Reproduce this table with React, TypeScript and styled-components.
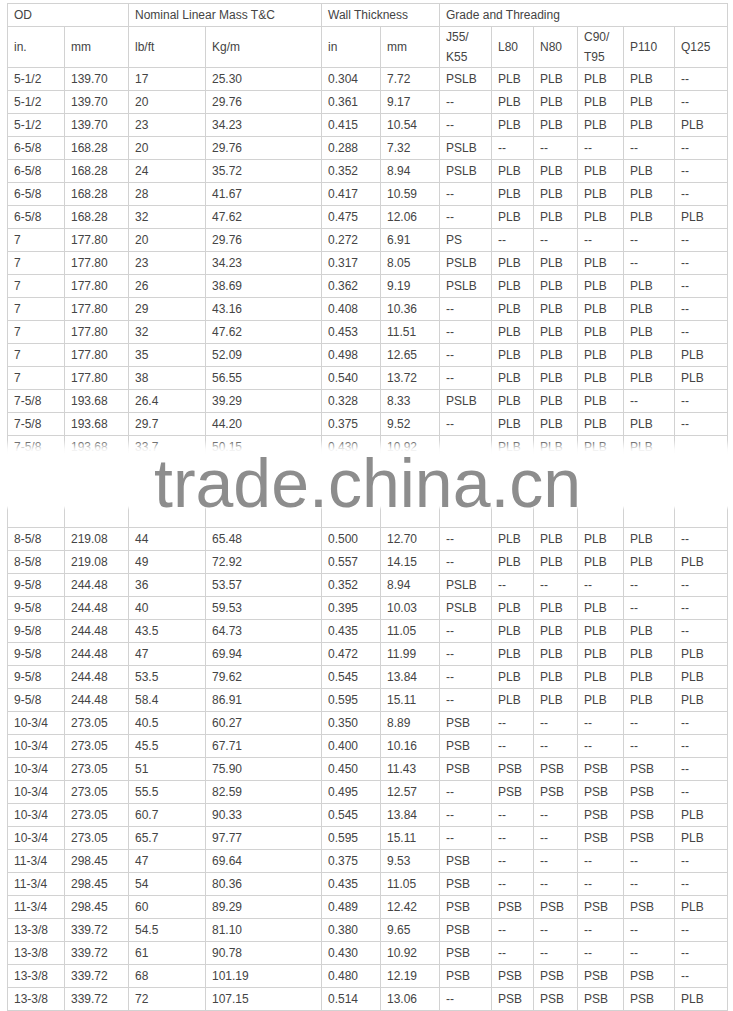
import { createGlobalStyle, styled } from 'styled-components'

const GlobalStyle = createGlobalStyle`
  html, body {
    margin: 0;
    padding: 0;
    background: #ffffff;
  }
`

const Page = styled.div`
  position: relative;
  padding: 3px 0 0 7px;
  font-family: 'Liberation Sans', Arial, sans-serif;
  font-size: 12px;
  color: #444444;
`

const Table = styled.table`
  border-collapse: collapse;
  table-layout: fixed;
  width: 721px;
`

const Cell = styled.td`
  border: 1px solid #d2d2d2;
  padding: 0 0 0 6px;
  height: 22px;
  line-height: 21px;
  vertical-align: middle;
  white-space: nowrap;
  overflow: hidden;
`

const GroupCell = styled(Cell)`
  height: 21px;
  padding-top: 1px;
`

const UnitCell = styled(Cell)`
  height: 40px;
  line-height: 20px;
`

const Watermark = styled.div`
  position: absolute;
  left: 0;
  right: 0;
  top: 440px;
  height: 70px;
  background: linear-gradient(
    to bottom,
    rgba(255, 255, 255, 0) 0px,
    rgba(255, 255, 255, 0.9) 9px,
    #ffffff 14px,
    #ffffff 66px,
    rgba(255, 255, 255, 0) 70px
  );
`

const WatermarkText = styled.div`
  padding: 9px 0 0 154px;
  font-family: 'Liberation Sans', Arial, sans-serif;
  font-size: 68px;
  line-height: 68px;
  color: #8d8d8d;
`

const widths = [57, 64, 77, 116, 59, 59, 52, 42, 44, 46, 51, 53]

const groups: [string, number][] = [
  ['OD', 2],
  ['Nominal Linear Mass T&C', 2],
  ['Wall Thickness', 2],
  ['Grade and Threading', 6],
]

const units: string[][] = [
  ['in.'],
  ['mm'],
  ['lb/ft'],
  ['Kg/m'],
  ['in'],
  ['mm'],
  ['J55/', 'K55'],
  ['L80'],
  ['N80'],
  ['C90/', 'T95'],
  ['P110'],
  ['Q125'],
]

const blank = ['', '', '', '', '', '', '', '', '', '', '', '']

const rows: string[][] = [
  ['5-1/2', '139.70', '17', '25.30', '0.304', '7.72', 'PSLB', 'PLB', 'PLB', 'PLB', 'PLB', '--'],
  ['5-1/2', '139.70', '20', '29.76', '0.361', '9.17', '--', 'PLB', 'PLB', 'PLB', 'PLB', '--'],
  ['5-1/2', '139.70', '23', '34.23', '0.415', '10.54', '--', 'PLB', 'PLB', 'PLB', 'PLB', 'PLB'],
  ['6-5/8', '168.28', '20', '29.76', '0.288', '7.32', 'PSLB', '--', '--', '--', '--', '--'],
  ['6-5/8', '168.28', '24', '35.72', '0.352', '8.94', 'PSLB', 'PLB', 'PLB', 'PLB', 'PLB', '--'],
  ['6-5/8', '168.28', '28', '41.67', '0.417', '10.59', '--', 'PLB', 'PLB', 'PLB', 'PLB', '--'],
  ['6-5/8', '168.28', '32', '47.62', '0.475', '12.06', '--', 'PLB', 'PLB', 'PLB', 'PLB', 'PLB'],
  ['7', '177.80', '20', '29.76', '0.272', '6.91', 'PS', '--', '--', '--', '--', '--'],
  ['7', '177.80', '23', '34.23', '0.317', '8.05', 'PSLB', 'PLB', 'PLB', 'PLB', '--', '--'],
  ['7', '177.80', '26', '38.69', '0.362', '9.19', 'PSLB', 'PLB', 'PLB', 'PLB', 'PLB', '--'],
  ['7', '177.80', '29', '43.16', '0.408', '10.36', '--', 'PLB', 'PLB', 'PLB', 'PLB', '--'],
  ['7', '177.80', '32', '47.62', '0.453', '11.51', '--', 'PLB', 'PLB', 'PLB', 'PLB', '--'],
  ['7', '177.80', '35', '52.09', '0.498', '12.65', '--', 'PLB', 'PLB', 'PLB', 'PLB', 'PLB'],
  ['7', '177.80', '38', '56.55', '0.540', '13.72', '--', 'PLB', 'PLB', 'PLB', 'PLB', 'PLB'],
  ['7-5/8', '193.68', '26.4', '39.29', '0.328', '8.33', 'PSLB', 'PLB', 'PLB', 'PLB', '--', '--'],
  ['7-5/8', '193.68', '29.7', '44.20', '0.375', '9.52', '--', 'PLB', 'PLB', 'PLB', 'PLB', '--'],
  ['7-5/8', '193.68', '33.7', '50.15', '0.430', '10.92', '', 'PLB', 'PLB', 'PLB', 'PLB', ''],
  // rows hidden by the watermark band
  blank,
  blank,
  blank,
  ['8-5/8', '219.08', '44', '65.48', '0.500', '12.70', '--', 'PLB', 'PLB', 'PLB', 'PLB', '--'],
  ['8-5/8', '219.08', '49', '72.92', '0.557', '14.15', '--', 'PLB', 'PLB', 'PLB', 'PLB', 'PLB'],
  ['9-5/8', '244.48', '36', '53.57', '0.352', '8.94', 'PSLB', '--', '--', '--', '--', '--'],
  ['9-5/8', '244.48', '40', '59.53', '0.395', '10.03', 'PSLB', 'PLB', 'PLB', 'PLB', '--', '--'],
  ['9-5/8', '244.48', '43.5', '64.73', '0.435', '11.05', '--', 'PLB', 'PLB', 'PLB', 'PLB', '--'],
  ['9-5/8', '244.48', '47', '69.94', '0.472', '11.99', '--', 'PLB', 'PLB', 'PLB', 'PLB', 'PLB'],
  ['9-5/8', '244.48', '53.5', '79.62', '0.545', '13.84', '--', 'PLB', 'PLB', 'PLB', 'PLB', 'PLB'],
  ['9-5/8', '244.48', '58.4', '86.91', '0.595', '15.11', '--', 'PLB', 'PLB', 'PLB', 'PLB', 'PLB'],
  ['10-3/4', '273.05', '40.5', '60.27', '0.350', '8.89', 'PSB', '--', '--', '--', '--', '--'],
  ['10-3/4', '273.05', '45.5', '67.71', '0.400', '10.16', 'PSB', '--', '--', '--', '--', '--'],
  ['10-3/4', '273.05', '51', '75.90', '0.450', '11.43', 'PSB', 'PSB', 'PSB', 'PSB', 'PSB', '--'],
  ['10-3/4', '273.05', '55.5', '82.59', '0.495', '12.57', '--', 'PSB', 'PSB', 'PSB', 'PSB', '--'],
  ['10-3/4', '273.05', '60.7', '90.33', '0.545', '13.84', '--', '--', '--', 'PSB', 'PSB', 'PLB'],
  ['10-3/4', '273.05', '65.7', '97.77', '0.595', '15.11', '--', '--', '--', 'PSB', 'PSB', 'PLB'],
  ['11-3/4', '298.45', '47', '69.64', '0.375', '9.53', 'PSB', '--', '--', '--', '--', '--'],
  ['11-3/4', '298.45', '54', '80.36', '0.435', '11.05', 'PSB', '--', '--', '--', '--', '--'],
  ['11-3/4', '298.45', '60', '89.29', '0.489', '12.42', 'PSB', 'PSB', 'PSB', 'PSB', 'PSB', 'PLB'],
  ['13-3/8', '339.72', '54.5', '81.10', '0.380', '9.65', 'PSB', '--', '--', '--', '--', '--'],
  ['13-3/8', '339.72', '61', '90.78', '0.430', '10.92', 'PSB', '--', '--', '--', '--', '--'],
  ['13-3/8', '339.72', '68', '101.19', '0.480', '12.19', 'PSB', 'PSB', 'PSB', 'PSB', 'PSB', '--'],
  ['13-3/8', '339.72', '72', '107.15', '0.514', '13.06', '--', 'PSB', 'PSB', 'PSB', 'PSB', 'PLB'],
]

export default function App() {
  return (
    <>
      <GlobalStyle />
      <Page>
        <Table>
          <colgroup>
            {widths.map((w, i) => (
              <col key={i} style={{ width: w }} />
            ))}
          </colgroup>
          <tbody>
            <tr>
              {groups.map(([label, span]) => (
                <GroupCell key={label} colSpan={span}>
                  {label}
                </GroupCell>
              ))}
            </tr>
            <tr>
              {units.map((lines, i) => (
                <UnitCell key={i}>
                  {lines.map((l, j) => (
                    <span key={j}>
                      {j > 0 && <br />}
                      {l}
                    </span>
                  ))}
                </UnitCell>
              ))}
            </tr>
            {rows.map((row, r) => (
              <tr key={r}>
                {row.map((v, c) => (
                  <Cell key={c}>{v}</Cell>
                ))}
              </tr>
            ))}
          </tbody>
        </Table>
        <Watermark>
          <WatermarkText>trade.china.cn</WatermarkText>
        </Watermark>
      </Page>
    </>
  )
}
